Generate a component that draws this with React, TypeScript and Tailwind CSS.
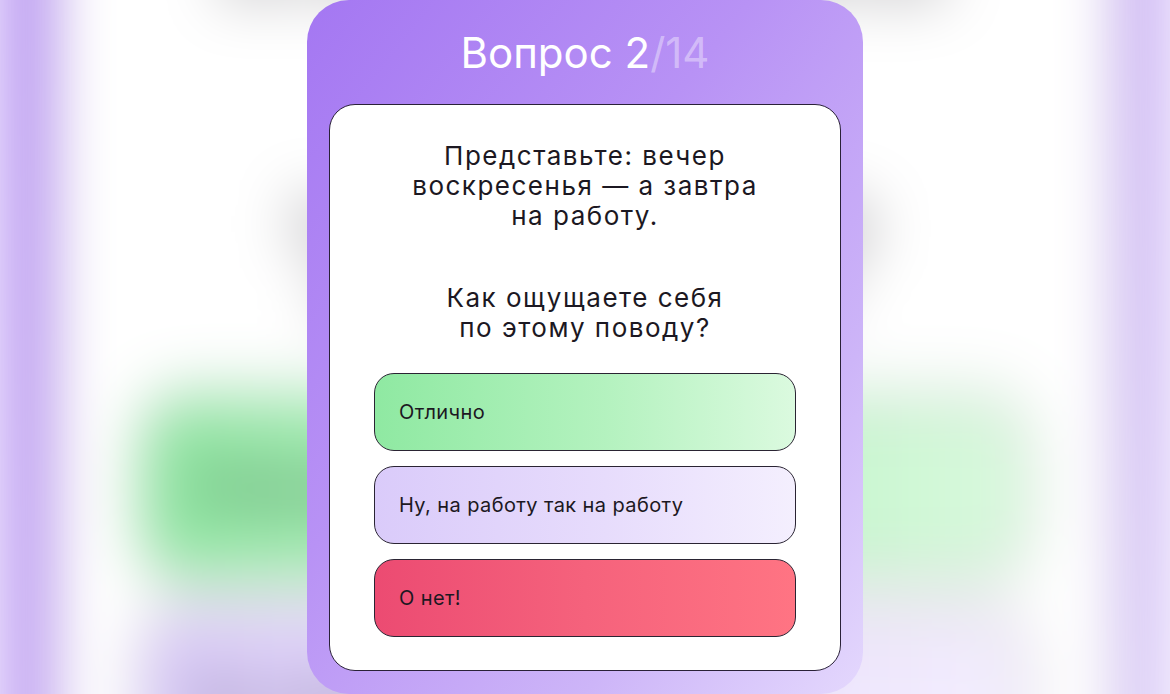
import React from "react";

const FONT = { fontFamily: '"Inter", "Noto Sans", sans-serif' };

function Option({ label, tone }: { label: string; tone: string }) {
  return (
    <div
      className={`flex h-[78px] items-center rounded-[20px] border-[1.5px] border-[#2a2433] pl-6 text-[20px] tracking-[0.4px] text-[#1c1822] ${tone}`}
    >
      {label}
    </div>
  );
}

function QuizCard() {
  return (
    <div
      className="flex h-[694px] w-[556px] flex-col rounded-[42px] bg-[linear-gradient(to_bottom_right,#a477f2_0%,#b892f5_40%,#cdb5f8_75%,#e4d8fd_100%)] px-[22px] pb-[23px]"
      style={FONT}
    >
      <div className="flex h-[104px] items-center justify-center pt-[1px] text-[42px] font-normal text-white">
        Вопрос 2<span className="text-white/40">/14</span>
      </div>
      <div className="flex flex-1 flex-col rounded-[26px] border-[1.5px] border-[#2a2138] bg-white px-[24px] pt-[36px]">
        <p className="text-center text-[26px] leading-[30px] tracking-[1.5px] text-[#1c1822]">
          Представьте: вечер
          <br />
          воскресенья — а завтра
          <br />
          на работу.
        </p>
        <p className="mt-[52px] text-center text-[26px] leading-[30px] tracking-[1.5px] text-[#1c1822]">
          Как ощущаете себя
          <br />
          по этому поводу?
        </p>
        <div className="mt-[30px] flex flex-col gap-[15px] px-[20px]">
          <Option label="Отлично" tone="bg-[linear-gradient(to_right,#8fe9a2,#b4f2bf_55%,#dbfadf)]" />
          <Option label="Ну, на работу так на работу" tone="bg-[linear-gradient(to_right,#dacbfa,#e7dcfc_55%,#f4effe)]" />
          <Option label="О нет!" tone="bg-[linear-gradient(to_right,#ec4b72,#f5627c_50%,#ff7483)]" />
        </div>
      </div>
    </div>
  );
}

export default function App() {
  return (
    <div className="relative h-[694px] w-[1170px] overflow-hidden bg-white">
      {/* enlarged, softened copy of the card behind the main one */}
      <div className="absolute inset-0 flex origin-[585px_354px] scale-x-[2.1] scale-y-[2.3] justify-center blur-[14px]">
        <QuizCard />
      </div>
      <div className="relative flex justify-center">
        <QuizCard />
      </div>
    </div>
  );
}
